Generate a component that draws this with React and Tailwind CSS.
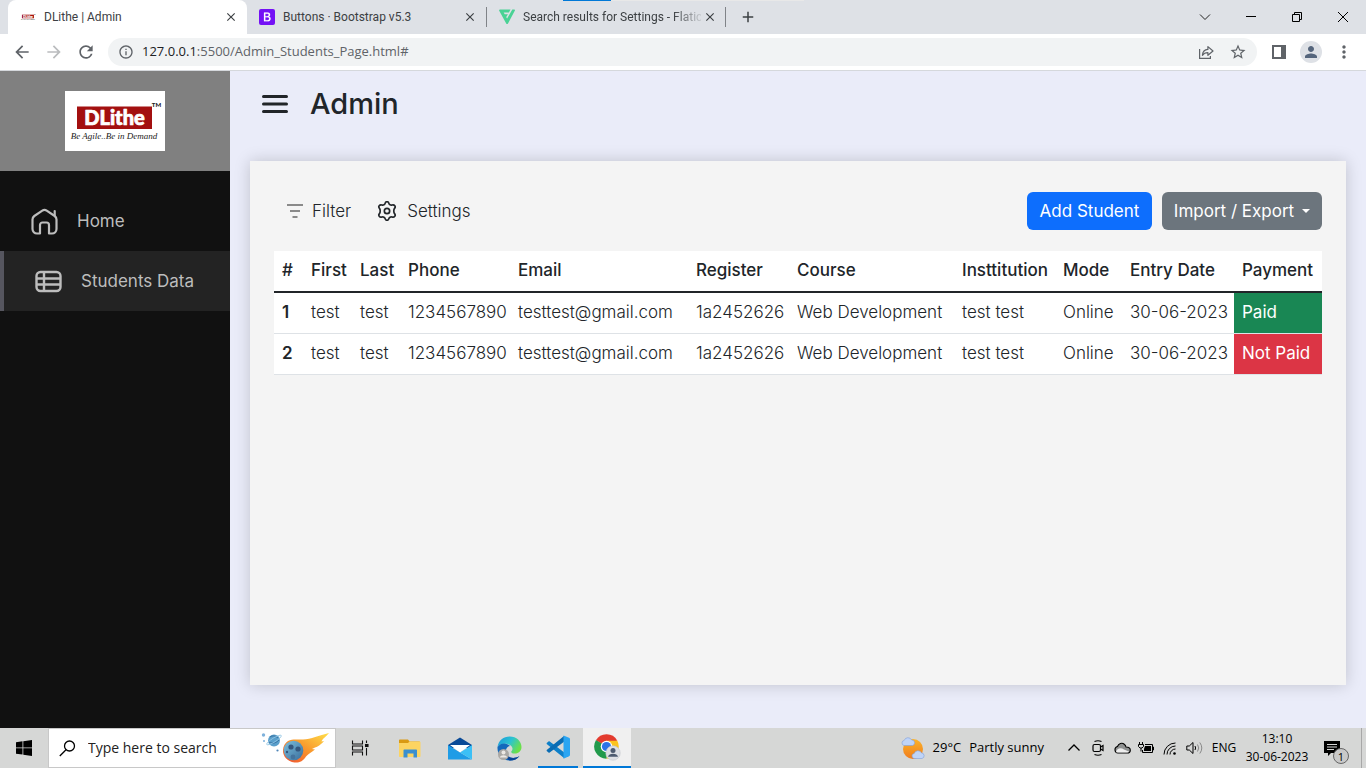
import React from "react";
import {
  MdArrowBack,
  MdArrowForward,
  MdRefresh,
  MdInfoOutline,
  MdStarOutline,
  MdPerson,
  MdMoreVert,
  MdAdd,
  MdClose,
} from "react-icons/md";

/* ---------- Brand ---------- */

function DLitheLogo({ className }) {
  return (
    <svg viewBox="0 0 100 60" className={className} role="img" aria-label="DLithe">
      <rect width="100" height="60" fill="#fff" />
      <rect x="12" y="15.5" width="75" height="22.5" fill="#a31010" />
      <text
        x="49.5"
        y="34"
        textAnchor="middle"
        fontFamily="Lato, sans-serif"
        fontWeight="900"
        fontSize="20"
        fill="#fff"
        stroke="#fff"
        strokeWidth=".7"
        strokeLinejoin="round"
      >
        DLithe
      </text>
      <text x="91.5" y="16" textAnchor="middle" fontFamily="Lato, sans-serif" fontWeight="900" fontSize="6" fill="#222">
        TM
      </text>
      <text x="49" y="48" textAnchor="middle" fontFamily="Liberation Serif, serif" fontStyle="italic" fontSize="9" fill="#222">
        Be Agile..Be in Demand
      </text>
    </svg>
  );
}

function BootstrapIcon() {
  return (
    <svg viewBox="0 0 16 16" className="size-4 shrink-0">
      <rect width="16" height="16" rx="2" fill="#7411f5" />
      <path
        d="M5 3.600h3.600c1.600 0 2.500.8 2.500 2.100 0 .9-.5 1.600-1.300 1.900 1.100.2 1.800 1 1.800 2.100 0 1.600-1.100 2.600-2.900 2.600H5zM6.300 7.200h1.900c1 0 1.500-.5 1.500-1.200S9.200 4.800 8.300 4.800h-2zM6.300 11.200h2.200c1.100 0 1.700-.5 1.700-1.400s-.6-1.500-1.800-1.500H6.300z"
        fill="#fff"
        stroke="#fff"
        strokeWidth=".2"
        fillRule="evenodd"
      />
    </svg>
  );
}

function FlaticonIcon() {
  return (
    <svg viewBox="0 0 16 16" className="size-4 shrink-0" fill="#4ad295">
      <path d="M1.300.5h10.200L9.900 3.400H4.700l1 1.800h3.200L7.500 7.700H7l1.100 1.900L13.300.5h2c.6 0 .9.6.6 1.100L9 14.400c-.4.800-1.400.8-1.800 0L.2 1.800C-.1 1.100.4.5 1.300.5z" />
    </svg>
  );
}

/* ---------- Browser ---------- */

function Tab({ icon, title, active, fade }) {
  return (
    <div
      className={
        active
          ? "flex h-full w-[239px] items-center rounded-t-lg bg-white pl-3 pr-2"
          : "flex h-full w-[239px] items-center pl-3 pr-2"
      }
    >
      {icon}
      <a
        href="#"
        className={
          fade
            ? "ml-2 w-[178px] whitespace-nowrap text-xs text-[#3c4043] [mask-image:linear-gradient(to_right,black_150px,transparent_182px)]"
            : "ml-2 w-[178px] whitespace-nowrap text-xs text-[#3c4043]"
        }
      >
        {title}
      </a>
      <button aria-label={"Close " + title} className="ml-auto grid size-4 place-items-center text-[#3c4043]">
        <MdClose className="size-3.5" />
      </button>
    </div>
  );
}

function WindowButtons() {
  return (
    <div className="ml-auto flex h-7 items-center text-black">
      <button aria-label="Search tabs" className="grid h-full w-[46px] place-items-center">
        <svg viewBox="0 0 12 12" className="size-3" fill="none" stroke="#222">
          <path d="M1 3.500l5 5 5-5" />
        </svg>
      </button>
      <button aria-label="Minimize" className="grid h-full w-[46px] place-items-center">
        <svg viewBox="0 0 10 10" className="size-2.5">
          <rect y="4" width="10" height="1" />
        </svg>
      </button>
      <button aria-label="Restore" className="grid h-full w-[46px] place-items-center">
        <svg viewBox="0 0 10 10" className="size-2.5" fill="none" stroke="black">
          <path d="M.5 2.500h7v7h-7zM2.500 2.500v-2h7v7h-2" />
        </svg>
      </button>
      <button aria-label="Close window" className="grid h-full w-[46px] place-items-center">
        <svg viewBox="0 0 10 10" className="size-2.5" stroke="black">
          <path d="M0 0l10 10M10 0L0 10" />
        </svg>
      </button>
    </div>
  );
}

function BrowserChrome() {
  return (
    <header className="border-b border-[#d5d8dc] bg-white font-['Open_Sans',sans-serif]">
      <div className="relative flex h-[34px] items-center bg-[#dee1e6] pl-2 font-['Roboto',sans-serif]">
        <div className="absolute left-[563px] top-0 flex">
          <div className="h-px w-12 bg-[#0078d7]" />
          <div className="h-px w-[193px] bg-[#e8e8e8]" />
        </div>
        <Tab icon={<DLitheLogo className="h-2.5 w-4 shrink-0" />} title="DLithe | Admin" active />
        <Tab icon={<BootstrapIcon />} title="Buttons · Bootstrap v5.3" />
        <div className="h-5 w-px bg-[#808388]" />
        <Tab icon={<FlaticonIcon />} title="Search results for Settings - Flatic" fade />
        <div className="-ml-px h-5 w-px bg-[#808388]" />
        <button aria-label="New tab" className="ml-3 grid size-5 place-items-center text-[#3c4043]">
          <MdAdd className="size-[18px]" />
        </button>
        <WindowButtons />
      </div>
      <div className="flex h-9 items-center px-3 text-[#5f6368]">
        <button aria-label="Back" className="w-8">
          <MdArrowBack className="size-5" />
        </button>
        <button aria-label="Forward" className="w-8 text-[#babcbe]">
          <MdArrowForward className="size-5" />
        </button>
        <button aria-label="Reload" className="w-8">
          <MdRefresh className="size-5" />
        </button>
        <div className="flex h-7 flex-1 items-center rounded-full bg-[#f1f3f4] px-2.5">
          <MdInfoOutline className="size-4" />
          <a href="#" className="ml-2 text-[13px]">
            <span className="text-[#202124]">127.0.0.1</span>:5500/Admin_Students_Page.html#
          </a>
          <button aria-label="Share" className="ml-auto">
            <svg viewBox="0 0 16 16" className="size-4" fill="none" stroke="currentColor" strokeWidth="1.200">
              <path d="M1.600 5v9.400h10.800v-2.500" />
              <path d="M4.400 11.300c.3-3.800 2.300-5.700 5.500-5.900V2.600L15 7l-5.100 4.300V8.600c-2.500 0-4.200.7-5.500 2.700z" strokeLinejoin="round" />
            </svg>
          </button>
          <button aria-label="Bookmark" className="ml-[15px]">
            <MdStarOutline className="size-[18px]" />
          </button>
        </div>
        <button aria-label="Side panel" className="ml-3.5 grid size-4 place-items-center">
          <svg viewBox="0 0 14 14" className="size-3.5">
            <path d="M0 0h14v14H0zM2 2v10h7V2z" fill="currentColor" fillRule="evenodd" />
          </svg>
        </button>
        <button aria-label="Profile" className="ml-[13px] grid size-[22px] place-items-center rounded-full bg-[#dee1e6] text-[#55657c]">
          <MdPerson className="size-[18px]" />
        </button>
        <button aria-label="Menu" className="ml-3 grid size-5 place-items-center">
          <MdMoreVert className="size-5" />
        </button>
      </div>
    </header>
  );
}

/* ---------- Page ---------- */

function HomeIcon() {
  return (
    <svg viewBox="0 0 27 27" className="size-[27px]" fill="none" stroke="currentColor" strokeWidth="2.200" strokeLinecap="round" strokeLinejoin="round">
      <path d="M9 25.500H6a4.500 4.500 0 0 1-4.500-4.500V11.500c0-1.500.6-2.600 1.800-3.500l8-5.300c1.300-.9 3.100-.9 4.400 0l8 5.300c1.200.9 1.800 2 1.800 3.500V21a4.500 4.500 0 0 1-4.500 4.500h-3v-8.500a2.500 2.500 0 0 0-2.500-2.500h-4A2.500 2.500 0 0 0 9 17z" />
      <path d="M23.700 7.500V3" />
    </svg>
  );
}

function TableIcon() {
  return (
    <svg viewBox="0 0 27 27" className="size-[27px]" fill="none" stroke="currentColor" strokeWidth="2.400">
      <rect x="1.500" y="4" width="24" height="19" rx="4" />
      <path d="M1.500 10.500h24M1.500 16.500h24M9 4v19" />
    </svg>
  );
}

function Sidebar() {
  return (
    <aside className="w-[230px] shrink-0 bg-[#111111] text-[#bdbdbd]">
      <div className="flex h-[100px] items-center justify-center bg-[#808080]">
        <DLitheLogo className="h-[60px] w-[100px]" />
      </div>
      <nav className="pt-5">
        <a href="#" className="flex h-[60px] items-center gap-[19px] pl-[31px]">
          <HomeIcon />
          Home
        </a>
        <a href="#" className="flex h-[60px] items-center gap-[19px] border-l-4 border-[#56565f] bg-[#232323] pl-[31px]">
          <TableIcon />
          Students Data
        </a>
      </nav>
    </aside>
  );
}

function GearIcon() {
  return (
    <svg viewBox="1 1 18 18" className="size-5" fill="none" stroke="#212529" strokeWidth="1.500" strokeLinejoin="round">
      <path d="M8.300 3.100c.5-2 2.900-2 3.400 0 .3 1.200 1.600 1.900 2.800 1.500 2.200-.7 3.700 1.400 2.300 3-.9 1-.9 3.800 0 4.800 1.400 1.600-.1 3.700-2.300 3-1.200-.4-2.500.3-2.800 1.500-.5 2-2.900 2-3.400 0-.3-1.200-1.600-1.900-2.800-1.500-2.200.7-3.700-1.400-2.300-3 .9-1 .9-3.800 0-4.800-1.400-1.600.1-3.700 2.300-3 1.200.4 2.500-.3 2.800-1.500z" />
      <circle cx="10" cy="10" r="2.400" />
    </svg>
  );
}

const columns = [
  ["#", "w-[29px]"],
  ["First", "w-[49px]"],
  ["Last", "w-[48px]"],
  ["Phone", "w-[110px]"],
  ["Email", "w-[178px]"],
  ["Register", "w-[101px]"],
  ["Course", "w-[165px]"],
  ["Insttitution", "w-[101px]"],
  ["Mode", "w-[67px]"],
  ["Entry Date", "w-[112px]"],
  ["Payment", "w-[88px]"],
];

const students = [
  ["test", "test", "1234567890", "testtest@gmail.com", "1a2452626", "Web Development", "test test", "Online", "30-06-2023", "Paid"],
  ["test", "test", "1234567890", "testtest@gmail.com", "1a2452626", "Web Development", "test test", "Online", "30-06-2023", "Not Paid"],
];

function StudentsTable() {
  return (
    <table className="w-full table-fixed border-separate border-spacing-0 whitespace-nowrap bg-white text-left text-[#212529]">
      <thead>
        <tr>
          {columns.map(([label, width]) => (
            <th key={label} scope="col" className={width + " h-[42px] border-b-2 border-[#212529] pb-0.5 pl-2 font-medium"}>
              {label}
            </th>
          ))}
        </tr>
      </thead>
      <tbody className="font-light">
        {students.map((row, i) => (
          <tr key={i}>
            <th scope="row" className="h-[41px] border-b border-[#dee2e6] pb-0.5 pl-2 font-semibold">
              {i + 1}
            </th>
            {row.map((value, j) => (
              <td
                key={j}
                className={
                  value === "Paid"
                    ? "border-b border-[#dee2e6] bg-[#198754] bg-clip-padding pb-0.5 pl-2 font-normal text-white"
                    : value === "Not Paid"
                      ? "border-b border-[#dee2e6] bg-[#dc3545] bg-clip-padding pb-0.5 pl-2 font-normal text-white"
                      : "border-b border-[#dee2e6] pb-0.5 pl-2"
                }
              >
                {value}
              </td>
            ))}
          </tr>
        ))}
      </tbody>
    </table>
  );
}

function AdminPage() {
  return (
    <div className="flex flex-1 bg-[#eaecf9] font-['Inter',sans-serif] text-[17px] leading-6 text-[#212529]">
      <Sidebar />
      <main className="flex min-w-0 flex-1 flex-col px-5">
        <div className="flex h-[90px] items-start gap-[22px] pl-3 pt-3">
          <button aria-label="Toggle sidebar" className="grid h-[42px] place-items-center">
            <svg viewBox="0 0 26 20" className="h-5 w-[26px]" stroke="#212529" strokeWidth="3" strokeLinecap="round">
              <path d="M1.500 2.500h23M1.500 10h23M1.500 17.500h23" />
            </svg>
          </button>
          <h1 className="text-[29px] font-medium leading-[42px]">Admin</h1>
        </div>
        <section className="mb-[43px] flex-1 bg-[#f4f4f4] px-6 pt-[31px] shadow-[0_0_15px_rgba(0,0,0,0.18)]">
          <div className="mb-[21px] flex h-[38px] items-center">
            <button className="ml-3 flex items-center gap-2 font-light">
              <svg viewBox="0 0 18 16" className="h-4 w-[18px]" stroke="#8a8a8a" strokeWidth="1.800" fill="none">
                <path d="M1 2h16M4 8h10M6.500 14h5" />
              </svg>
              Filter
            </button>
            <button className="ml-[26px] flex items-center gap-2.5 font-light">
              <GearIcon />
              Settings
            </button>
            <button className="ml-auto h-[38px] w-[125px] rounded-md bg-[#0d6efd] text-white">Add Student</button>
            <button className="ml-2.5 flex h-[38px] w-40 items-center justify-center gap-2 rounded-md bg-[#6c757d] text-white">
              Import / Export
              <svg viewBox="0 0 8 4" className="h-1 w-2" fill="currentColor">
                <path d="M0 0h8L4 4z" />
              </svg>
            </button>
          </div>
          <StudentsTable />
        </section>
      </main>
    </div>
  );
}

/* ---------- Taskbar ---------- */

function MeteorArt() {
  return (
    <svg viewBox="0 0 70 34" className="h-[34px] w-[70px]">
      <defs>
        <linearGradient id="tail" x1="0" y1="1" x2="1" y2="0">
          <stop offset="0" stopColor="#f1502f" />
          <stop offset=".5" stopColor="#f99a2d" />
          <stop offset="1" stopColor="#ffe04a" />
        </linearGradient>
        <linearGradient id="rock" x1="0" y1="0" x2="1" y2="1">
          <stop offset="0" stopColor="#7cc0dd" />
          <stop offset="1" stopColor="#3a6d9c" />
        </linearGradient>
      </defs>
      <circle cx="2.500" cy="4" r="1.700" fill="#7fb2dc" />
      <circle cx="3" cy="10" r="1" fill="#7fb2dc" />
      <circle cx="16.500" cy="19.500" r="1.100" fill="#4f86b8" />
      <circle cx="13" cy="9.500" r="6" fill="#5b9fcb" />
      <path d="M9 6c3-2 6-1 8 1M8 11c4 2 7 1 10-2" stroke="#356f9f" fill="none" />
      <ellipse cx="13" cy="9" rx="8.500" ry="2" transform="rotate(-32 13 9)" fill="none" stroke="#8fc4e4" strokeWidth=".8" />
      <path d="M27 10c5-2.500 10-1 15-1.500 8-.5 16-4 26-6.500-3 4-6 5-7.500 8.500l2.500-.5c-4 5-8 6-12 8l3 .5c-4 3-6 4-9 7-3 5-7 6.500-11.500 6-7-.8-12-6.500-11.500-12.500.3-4 2-7 5-9z" fill="url(#tail)" />
      <circle cx="32.500" cy="19.500" r="9.800" fill="url(#rock)" />
      <circle cx="30" cy="16" r="2.600" fill="#34577f" />
      <circle cx="37" cy="18" r="2.600" fill="#34577f" />
      <circle cx="32" cy="26" r="2.400" fill="#44739d" />
      <circle cx="26" cy="21" r="1.200" fill="#34577f" />
    </svg>
  );
}

function TaskViewIcon() {
  return (
    <svg viewBox="0 0 18 16" className="h-4 w-[18px]" fill="none" stroke="#111" strokeWidth="1.100">
      <path d="M1.500.5v3.500h10V.500M1.500 15.500v-3.500h10v3.500M1.500 6h10v4h-10zM15.500.5v2.500M15.500 8v7.500" />
      <rect x="14.500" y="4.500" width="2.500" height="2" fill="#111" />
    </svg>
  );
}

function FolderIcon() {
  return (
    <svg viewBox="0 0 22 19" className="h-[19px] w-[22px]">
      <path d="M0 1.500C0 .7.500.5 1 .5h8l1.500 2H20c.7 0 1 .3 1 1V17H0z" fill="#d99a14" />
      <path d="M0 4h9l1.500-1.500H20.500c.5 0 1 .4 1 1V17c0 .6-.4 1-1 1H1c-.6 0-1-.4-1-1z" fill="#fcd462" />
      <path d="M4.500 18.500v-7c0-.6.4-1 1-1h11.500c.6 0 1 .4 1 1v7h-3.500v-4h-6v4z" fill="#3a8fd0" />
    </svg>
  );
}

function MailIcon() {
  return (
    <svg viewBox="0 0 24 23" className="h-[23px] w-6">
      <path d="M0 8L12 .5 24 8v3H0z" fill="#0a4a97" />
      <path d="M2 8h20L12 15.500z" fill="#fff" />
      <path d="M0 8l12 7.500L24 22.500H0z" fill="#1f9ce6" />
      <path d="M12 15.500L24 8v14.500z" fill="#3cc0f6" />
    </svg>
  );
}

function EdgeIcon() {
  return (
    <svg viewBox="0 0 25 25" className="size-[25px]">
      <defs>
        <linearGradient id="edgeTop" x1="0" y1="0" x2="1" y2=".5">
          <stop offset="0" stopColor="#1b96dc" />
          <stop offset=".55" stopColor="#2cc3d1" />
          <stop offset="1" stopColor="#6be04a" />
        </linearGradient>
      </defs>
      <path d="M.5 11C1.500 4.500 6.500.5 12.700.5 19.500.5 24.500 5.300 24.500 11c0 4-3 6.500-6.500 6.500-2.700 0-4.200-1-3.700-2 1-1 1.500-2.200 1-3.700C14 7.500 4 6 .5 11z" fill="url(#edgeTop)" />
      <path d="M.5 11c3-4.500 9.500-4.500 12.500-1-3 .5-4.500 3-4 6.500 1 5 7 7.500 13.500 3.500-2.500 3.500-6 4.700-10 4.500C5.500 24.200 0 18.500.5 11z" fill="#1369bc" />
      <path d="M9 16.500c1 5 7 7.500 13.500 3.500-2.500 3.500-6 4.700-10 4.500-4-2-5-5-3.500-8z" fill="#0b4494" />
      <circle cx="6.500" cy="18.500" r="5.500" fill="#aaa8a5" />
      <circle cx="6.500" cy="16.500" r="2" fill="#ece8e4" />
      <path d="M2.800 21.500c.8-3 6.600-3 7.400 0z" fill="#ece8e4" />
    </svg>
  );
}

function VsCodeIcon() {
  return (
    <svg viewBox="0 0 24 24" className="size-6">
      <path d="M1 7.800l1.500-1.300c.3-.3.8-.3 1.200 0L18 17.300V23L1 9.300c-.5-.4-.5-1.100 0-1.500z" fill="#0d7fc9" />
      <path d="M1 16.200l1.500 1.300c.3.300.8.300 1.200 0L18 6.700V1L1 14.700c-.5.4-.5 1.100 0 1.500z" fill="#0a6cb3" />
      <path d="M17.500.4L23 2.800c.6.300 1 .8 1 1.500v15.400c0 .7-.4 1.200-1 1.500l-5.500 2.500z" fill="#2aa5f2" />
    </svg>
  );
}

function ChromeIcon() {
  return (
    <svg viewBox="0 0 27 27" className="size-[27px]">
      <path d="M12.500 12.500L1.900 6.300A12.200 12.200 0 0 1 23.200 6.500z" fill="#e33b2e" />
      <path d="M12.500 12.500l10.700-6A12.200 12.200 0 0 1 12.500 24.700z" fill="#fcc31e" />
      <path d="M12.500 12.500v12.200A12.200 12.200 0 0 1 1.900 6.300z" fill="#229a4c" />
      <path d="M12.500 6.700h10.800L17.600 15.500z" fill="#fcc31e" />
      <path d="M1.900 6.300l5.600 9.200 5-3z" fill="#229a4c" />
      <circle cx="12.500" cy="12.500" r="5.800" fill="#fff" />
      <circle cx="12.500" cy="12.500" r="4.600" fill="#2b73e6" />
      <circle cx="19" cy="19" r="7.200" fill="#dcdfe5" stroke="#c2c6cc" strokeWidth=".6" />
      <circle cx="19" cy="16.500" r="2.500" fill="#4c5a70" />
      <path d="M14 22.800c.5-4 9.500-4 10 0z" fill="#4c5a70" />
    </svg>
  );
}

function WeatherIcon() {
  return (
    <svg viewBox="0 0 24 23" className="h-[23px] w-6">
      <defs>
        <linearGradient id="sun" x1="0" y1="0" x2="0" y2="1">
          <stop offset="0" stopColor="#fbb32b" />
          <stop offset="1" stopColor="#f07c1d" />
        </linearGradient>
      </defs>
      <circle cx="12" cy="12" r="10" fill="url(#sun)" />
      <path d="M3 8.500a2.600 2.600 0 0 1 .2-5.100A4 4 0 0 1 10.600 3 2.800 2.800 0 0 1 11.500 8.500z" fill="#bfd4f8" stroke="#7f9fdc" strokeWidth=".6" />
      <path d="M13 21.500a2.600 2.600 0 0 1 .2-5.100 4 4 0 0 1 7.400-.4 2.800 2.800 0 0 1 .4 5.500z" fill="#bfd4f8" stroke="#7f9fdc" strokeWidth=".6" />
    </svg>
  );
}

function TrayIcons() {
  const button = "grid h-full w-6 place-items-center";
  return (
    <>
      <button aria-label="Show hidden icons" className={button}>
        <svg viewBox="0 0 12 12" className="size-3" fill="none" stroke="black" strokeWidth="1.300">
          <path d="M.5 8.500L6 3l5.500 5.500" />
        </svg>
      </button>
      <button aria-label="Camera" className={button}>
        <svg viewBox="0 0 12 16" className="h-4 w-3" fill="none" stroke="black" strokeWidth="1.200">
          <rect x="1" y="4.500" width="7.500" height="7" rx="1.500" />
          <path d="M8.500 7l2.500-1.500v5L8.500 9M2.500 1.500Q6 0 9.500 1.500M2.500 14.500q3.500 1.500 7 0" />
        </svg>
      </button>
      <button aria-label="OneDrive" className={button}>
        <svg viewBox="0 0 17 12" className="h-3 w-[17px]" stroke="black" strokeWidth="1.100">
          <path d="M4 11a3.300 3.300 0 0 1-.5-6.500C4.500 1.500 8 0 10.500 2.500c1 .8 1.300 1.500 1.500 2.500 2.500 0 4.300 1.200 4.300 3.200 0 1.800-1.300 2.800-3 2.800z" fill="#8f9191" />
          <path d="M2 10c1-4 5-4.500 8-2.500l5.300 2.300c-.5.5-1.200.7-2 .7H4c-.8 0-1.500-.1-2-.5z" fill="#eee" stroke="none" />
        </svg>
      </button>
      <button aria-label="Battery" className={button}>
        <svg viewBox="0 0 16 12" className="h-3 w-4" fill="none" stroke="black">
          <path d="M7 2.500h7.500v8h-10V8M14.500 5h1v3h-1" />
          <path d="M7 4h6v5H6V7z" fill="black" stroke="none" />
          <path d="M1.500 0v2.500M4.500 0v2.500M.5 2.500h5v2L4 6H2L.5 4.500zM3 6v3.500" />
        </svg>
      </button>
      <button aria-label="Network" className={button}>
        <svg viewBox="0 0 14 13" className="h-[13px] w-3.5" fill="none" stroke="black">
          <path d="M1 12.500A11.500 11.500 0 0 1 12.500 1M4 12.500A8.500 8.500 0 0 1 12.500 4M7 12.500A5.500 5.500 0 0 1 12.500 7" />
          <circle cx="11.500" cy="11.500" r="1.300" fill="black" stroke="none" />
        </svg>
      </button>
      <button aria-label="Volume" className={button}>
        <svg viewBox="0 0 17 14" className="h-3.5 w-[17px]" fill="none" stroke="black">
          <path d="M.8 5v4h2.500L7 12.500v-11L3.300 5zM9 5q1.200 2 0 4" />
          <path d="M11.500 3.500q2.500 3.500 0 7M13.800 1.500q4 5.500 0 11" stroke="#888" />
        </svg>
      </button>
    </>
  );
}

function Taskbar() {
  return (
    <footer className="flex h-10 items-center bg-[#d6d7d6] font-['Open_Sans',sans-serif] text-black">
      <button aria-label="Start" className="grid h-full w-12 shrink-0 place-items-center">
        <svg viewBox="0 0 16 16" className="size-4">
          <path d="M0 2.200L6.500 1.300v6.200H0zM7.300 1.200L16 0v7.500H7.300zM0 8.300h6.500v6.300L0 13.700zM7.300 8.300H16V16l-8.700-1.200z" />
        </svg>
      </button>
      <label className="flex h-full w-72 shrink-0 items-center border border-[#c8c8c8] bg-white pl-2.5 pr-1">
        <svg viewBox="0 0 17 17" className="size-[17px] shrink-0" fill="none" stroke="black" strokeWidth="1.300">
          <circle cx="10.500" cy="6" r="5" />
          <path d="M7 9.700L.8 16" />
        </svg>
        <input
          type="text"
          aria-label="Search"
          placeholder="Type here to search"
          className="ml-3 min-w-0 flex-1 bg-transparent text-sm outline-none placeholder:text-[#222]"
        />
        <MeteorArt />
      </label>
      <div className="flex h-full">
        <button aria-label="Task View" className="grid w-12 place-items-center">
          <TaskViewIcon />
        </button>
        <button aria-label="File Explorer" className="grid w-[52px] place-items-center">
          <FolderIcon />
        </button>
        <button aria-label="Mail" className="grid w-12 place-items-center">
          <MailIcon />
        </button>
        <button aria-label="Edge" className="grid w-[50px] place-items-center">
          <EdgeIcon />
        </button>
        <button aria-label="Visual Studio Code" className="ml-1 mr-[5px] grid w-10 place-items-center border-b-2 border-[#0078d7]">
          <VsCodeIcon />
        </button>
        <button aria-label="Chrome" className="grid w-12 place-items-center border-b-2 border-[#0078d7] bg-[#f0f0f0]">
          <ChromeIcon />
        </button>
      </div>
      <div className="ml-auto flex h-full items-center">
        <button className="mr-[18px] flex items-center gap-2 whitespace-nowrap text-[13px]">
          <WeatherIcon />
          <span>29°C</span>
          <span>Partly sunny</span>
        </button>
        <TrayIcons />
        <button className="w-9 text-center text-xs">ENG</button>
        <button className="w-[70px] text-center text-xs leading-[18px]">
          13:10
          <br />
          30-06-2023
        </button>
        <button aria-label="Notifications" className="relative grid h-full w-[50px] place-items-center border-r border-[#a8a8a8]">
          <svg viewBox="0 0 16 15" className="mr-2.5 h-[15px] w-4">
            <path d="M0 0h16v12H7l-3 3v-3H0z" />
            <path d="M3 3.500h10M3 6h10M3 8.500h7" stroke="#d6d7d6" />
          </svg>
          <span className="absolute bottom-1 right-3 grid size-4 place-items-center rounded-full border border-[#666] bg-[#c9c9c9] text-[11px] leading-none">
            1
          </span>
        </button>
        <div className="w-1" />
      </div>
    </footer>
  );
}

export default function App() {
  return (
    <div className="flex min-h-screen flex-col">
      <BrowserChrome />
      <AdminPage />
      <Taskbar />
    </div>
  );
}
